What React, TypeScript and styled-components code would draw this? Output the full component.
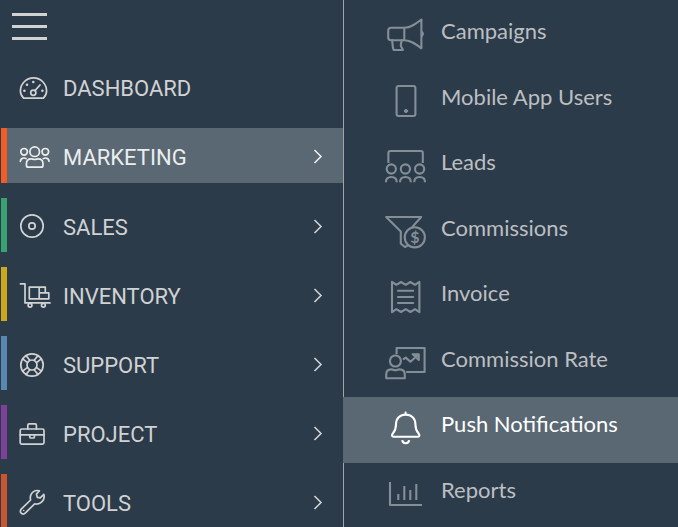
import React from "react";
import styled, { createGlobalStyle, css } from "styled-components";

const colors = {
  background: "#2c3b49",
  active: "#5a6874",
  text: "#d0d2d4",
  textActive: "#eceded",
  subText: "#bcbfc2",
  subIcon: "#848e97",
  divider: "#a3a5a7",
};

const GlobalStyle = createGlobalStyle`
  * { box-sizing: border-box; }
  body {
    margin: 0;
    background: ${colors.background};
    font-family: Lato, "Noto Sans", sans-serif;
  }
`;

const Shell = styled.div`
  display: grid;
  grid-template-columns: 343px 1fr;
  height: 100vh;
  overflow: hidden;
`;

const Sidebar = styled.nav`
  display: flex;
  flex-direction: column;
`;

const MenuToggle = styled.button`
  display: flex;
  flex-direction: column;
  align-self: flex-start;
  gap: 9px;
  height: 59px;
  padding: 13px 12px;
  border: 0;
  background: none;
  cursor: pointer;
`;

const ToggleLine = styled.span`
  width: 35px;
  height: 3px;
  background: ${colors.text};
`;

const MainList = styled.ul`
  display: flex;
  flex-direction: column;
  gap: 15px;
  margin: 0;
  padding: 0 0 0 1px;
  list-style: none;
`;

const MainLink = styled.a<{ $accent: string; $active?: boolean }>`
  display: flex;
  align-items: flex-start;
  height: ${(p) => (p.$active ? 55 : 54)}px;
  padding: 15px 20px 0 12px;
  border-left: 6px solid ${(p) => p.$accent};
  color: ${(p) => (p.$active ? colors.textActive : colors.text)};
  background: ${(p) => (p.$active ? colors.active : "transparent")};
  text-decoration: none;
`;

const MainIcon = styled.svg`
  flex: none;
  width: 32px;
  height: 28px;
  fill: none;
  stroke: currentColor;
  stroke-width: 1.7;
  stroke-linecap: round;
  stroke-linejoin: round;
`;

const MainLabel = styled.span`
  flex: 1;
  padding-left: 12px;
  font-family: Roboto, Lato, sans-serif;
  font-size: 22px;
  line-height: 30px;
`;

const Chevron = styled.svg`
  width: 10px;
  height: 26px;
  fill: none;
  stroke: currentColor;
  stroke-width: 1.6;
`;

const SubPanel = styled.nav`
  border-left: 1px solid ${colors.divider};
`;

const SubList = styled.ul`
  margin: 0;
  padding: 4px 0 0;
  list-style: none;
`;

const SubItem = styled.li`
  height: 66px;
  &:nth-child(even) {
    height: 65px;
  }
`;

const SubLink = styled.a<{ $active?: boolean }>`
  display: flex;
  align-items: flex-start;
  gap: 13px;
  height: 100%;
  padding: 13px 0 0 40px;
  color: ${colors.subText};
  text-decoration: none;
  ${(p) =>
    p.$active &&
    css`
      margin-left: -1px;
      padding-left: 41px;
      color: #ffffff;
      background: ${colors.active};
    `}
`;

const SubIcon = styled.svg<{ $active?: boolean }>`
  flex: none;
  width: 44px;
  height: 36px;
  color: ${(p) => (p.$active ? "#ffffff" : colors.subIcon)};
  fill: none;
  stroke: currentColor;
  stroke-width: 2.1;
  stroke-linecap: round;
  stroke-linejoin: round;
`;

const SubLabel = styled.span`
  font-size: 22px;
  line-height: 28px;
`;

const CurrencySign = styled.text`
  fill: currentColor;
  stroke: none;
  font-family: Lato, sans-serif;
  font-size: 16px;
  font-weight: 700;
  text-anchor: middle;
`;

type MainEntry = { label: string; accent: string; icon: React.ReactNode; active?: boolean; leaf?: boolean };
type SubEntry = { label: string; icon: React.ReactNode; active?: boolean };

const mainEntries: MainEntry[] = [
  {
    label: "DASHBOARD",
    accent: "transparent",
    leaf: true,
    icon: (
      <>
        <path d="M4.6 24.2H24.4C26.4 22.2 27.6 19.8 27.6 17A13.1 13.1 0 0 0 1.4 17C1.4 19.8 2.6 22.2 4.6 24.2Z" />
        <circle cx="14.3" cy="18.7" r="2.6" />
        <path d="M16 16.6L21 11" />
        <path strokeWidth="2.6" d="M5.4 16.7h.01M8 10.7h.01M14.3 8h.01M23.4 16.7h.01" />
      </>
    ),
  },
  {
    label: "MARKETING",
    accent: "#f25c27",
    active: true,
    icon: (
      <>
        <circle cx="15.7" cy="8.7" r="4.8" />
        <circle cx="5.1" cy="8.8" r="3.3" />
        <circle cx="26.3" cy="8.8" r="3.3" />
        <path d="M1.4 18.3C1.6 16 2.8 15 5 15C5.8 15 6.4 15.2 7 15.5M30 18.3C29.8 16 28.6 15 26.4 15C25.6 15 25 15.2 24.4 15.5" />
        <path d="M12.3 15.8C13.6 15.8 14 16.5 15.7 16.5S17.8 15.8 19.1 15.8C22.5 15.8 24 18 24 20.8V22.2Q24 24.2 22 24.2H9.4Q7.4 24.2 7.4 22.2V20.8C7.4 18 8.9 15.8 12.3 15.8Z" />
      </>
    ),
  },
  {
    label: "SALES",
    accent: "#3aa272",
    icon: (
      <>
        <circle cx="13" cy="13" r="11.2" />
        <circle cx="13" cy="13" r="3.2" />
      </>
    ),
  },
  {
    label: "INVENTORY",
    accent: "#cbaa1d",
    icon: (
      <>
        <path d="M1.4 1.8H6V20.9H31" />
        <path d="M10.3 5.1H26.3V10.8H29.8V16.8H10.3ZM20.2 5.1V16.8M20.2 10.8H26.3" />
        <circle cx="11" cy="23.2" r="1.9" />
        <circle cx="24.4" cy="23.2" r="1.9" />
      </>
    ),
  },
  {
    label: "SUPPORT",
    accent: "#5a87b0",
    icon: (
      <>
        <circle cx="13" cy="14" r="11.2" />
        <circle cx="13" cy="14" r="5" />
        <path d="M3.7 7.8L8.5 11.6M7 4.5L10.8 9.3M22.3 7.8L17.5 11.6M19 4.5L15.2 9.3M3.7 20.2L8.5 16.4M7 23.5L10.8 18.7M22.3 20.2L17.5 16.4M19 23.5L15.2 18.7" />
      </>
    ),
  },
  {
    label: "PROJECT",
    accent: "#7c4199",
    icon: (
      <>
        <rect x="1.2" y="9" width="23.8" height="15.2" rx="1.6" />
        <path d="M8.8 9V5.2Q8.8 3.8 10.2 3.8H16Q17.4 3.8 17.4 5.2V9M1.2 14.8H25M10.8 14.8V17Q10.8 18 11.8 18H14.4Q15.4 18 15.4 17V14.8" />
      </>
    ),
  },
  {
    label: "TOOLS",
    accent: "#c9562e",
    icon: (
      <>
        <path d="M20.4 1.8C17 1 13.6 2.4 12 5.6C11.2 7.4 11.1 9.2 11.6 11L2.2 20.2A2.7 2.7 0 0 0 6.2 24.2L15.6 14.8C18 15.4 20.8 14.8 22.8 12.9C25 10.8 25.6 7.8 24.8 5.4L21.3 8.9L18.3 8.3L17.4 5Z" />
        <path strokeWidth="1.6" d="M4.7 21.5h.01" />
      </>
    ),
  },
];

const subEntries: SubEntry[] = [
  {
    label: "Campaigns",
    icon: (
      <>
        <path d="M20.3 10.8H7.2Q4.2 10.8 4.2 13.8V20.2Q4.2 23.2 7.2 23.2H20.3ZM20.3 10.8C27 10.6 32 6.6 37.4 2.5V31.3C32 27.2 27 23.4 20.3 23.2" />
        <path d="M8.2 23.4C8.4 27 8.5 30 9.6 33H18.8C18.9 31 16.8 30.6 16.8 28.2C16.8 26.2 17.4 25.6 17.8 23.4" />
        <path fill="currentColor" strokeWidth="1" d="M37.8 14C40 15.2 40 18.6 37.8 19.8Z" />
      </>
    ),
  },
  {
    label: "Mobile App Users",
    icon: (
      <>
        <rect x="12.6" y="3" width="18.8" height="30" rx="2" />
        <circle cx="22" cy="28" r="1.6" fill="currentColor" strokeWidth="1" />
      </>
    ),
  },
  {
    label: "Leads",
    icon: (
      <>
        <path strokeLinecap="butt" d="M4.4 15V4.8Q4.4 3 6.2 3H37Q38.8 3 38.8 4.8V15" />
        {[7.3, 21.4, 35.6].map((x) => (
          <React.Fragment key={x}>
            <circle cx={x} cy="21" r="4.6" />
            <path strokeLinecap="butt" d={`M${x - 5.4} 34.2C${x - 5.4} 30.6 ${x - 3.4} 29 ${x} 29S${x + 5.4} 30.6 ${x + 5.4} 34.2`} />
          </React.Fragment>
        ))}
      </>
    ),
  },
  {
    label: "Commissions",
    icon: (
      <>
        <path d="M28.6 12.6L37.2 3H2.2L16.8 17.4V29.6L21 33L23.6 31.6" />
        <circle cx="30.8" cy="23.3" r="10.1" />
        <CurrencySign x="30.8" y="29">$</CurrencySign>
      </>
    ),
  },
  {
    label: "Invoice",
    icon: (
      <>
        <path d="M8 2.8L12.4 5.8L17 3L21.7 5.8L26.4 3L31 5.8L35.4 2.8V33.2L31 30.2L26.4 33L21.7 30.2L17 33L12.4 30.2L8 33.2Z" />
        <path d="M14 11.8H29.2M14 18H29.2M14 24H29.2" />
      </>
    ),
  },
  {
    label: "Commission Rate",
    icon: (
      <>
        <path d="M12.6 8.4V3H40.6V27H23" />
        <circle cx="11.4" cy="16" r="5.5" />
        <path d="M7.4 24.4C9 24.4 9.4 25.2 11.4 25.2S13.8 24.4 15.4 24.4C19.2 24.4 20.8 26.6 20.8 29.6V33.2H2.2V29.6C2.2 26.6 3.6 24.4 7.4 24.4Z" />
        <path d="M19.6 14L21.8 12.6L26.4 16.8L33.4 10.4M28.6 9.2H34.8V15L28.8 9.2" />
      </>
    ),
  },
  {
    label: "Push Notifications",
    active: true,
    icon: (
      <>
        <path d="M21.6 2.6V4.4M9.4 26.8H34C36 26.4 35.6 24.6 34.4 23.2C32.2 20.6 31.4 19 31.4 14.2C31.4 8.4 27.4 4.6 21.7 4.6S12 8.4 12 14.2C12 19 11.2 20.6 9 23.2C7.8 24.6 7.4 26.4 9.4 26.8Z" />
        <path strokeLinecap="butt" d="M18.2 30.2C18.8 34.2 24.6 34.2 25.2 30.2" />
      </>
    ),
  },
  {
    label: "Reports",
    icon: (
      <path strokeLinecap="butt" d="M6 6V29H38M14.3 18V24M20.3 10V24M26.3 14V24M32.3 8V24" />
    ),
  },
];

export default function App() {
  return (
    <>
      <GlobalStyle />
      <Shell>
        <Sidebar aria-label="Main">
          <MenuToggle type="button" aria-label="Toggle menu">
            <ToggleLine />
            <ToggleLine />
            <ToggleLine />
          </MenuToggle>
          <MainList>
            {mainEntries.map((entry) => (
              <li key={entry.label}>
                <MainLink href="#" $accent={entry.accent} $active={entry.active}>
                  <MainIcon viewBox="0 0 32 28" aria-hidden="true">{entry.icon}</MainIcon>
                  <MainLabel>{entry.label}</MainLabel>
                  {!entry.leaf && (
                    <Chevron viewBox="0 0 10 26" aria-hidden="true">
                      <path d="M1.5 7L8 13.5L1.5 20" />
                    </Chevron>
                  )}
                </MainLink>
              </li>
            ))}
          </MainList>
        </Sidebar>
        <SubPanel aria-label="Marketing">
          <SubList>
            {subEntries.map((entry) => (
              <SubItem key={entry.label}>
                <SubLink href="#" $active={entry.active}>
                  <SubIcon viewBox="0 0 44 36" $active={entry.active} aria-hidden="true">{entry.icon}</SubIcon>
                  <SubLabel>{entry.label}</SubLabel>
                </SubLink>
              </SubItem>
            ))}
          </SubList>
        </SubPanel>
      </Shell>
    </>
  );
}
